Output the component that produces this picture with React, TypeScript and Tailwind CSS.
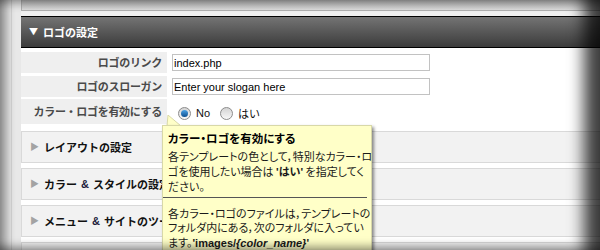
const jp = "font-['Noto_Sans_CJK_JP',sans-serif]";
const latin = "font-['Liberation_Sans','Noto_Sans_CJK_JP',sans-serif]";

function Radio({ checked }: { checked?: boolean }) {
  return (
    <span className="flex h-[13px] w-[13px] items-center justify-center rounded-full border border-[#8c8c8c] bg-gradient-to-b from-[#d4d4d4] to-[#f8f8f8]">
      {checked && (
        <span className="h-[7px] w-[7px] rounded-full bg-gradient-to-b from-[#4aa3e6] to-[#0d4f8f]" />
      )}
    </span>
  );
}

function FormRow({ label, className, children }: { label: string; className: string; children: React.ReactNode }) {
  return (
    <div className={`flex ${className}`}>
      <div className="flex w-[146px] items-center justify-end bg-[#efefef] pr-[5px] text-[11px] font-bold tracking-[-0.3px] text-[#4a4a4a]">
        {label}
      </div>
      <div className="flex flex-1 items-center bg-white pl-[5px]">{children}</div>
    </div>
  );
}

function Section({ children }: { children?: React.ReactNode }) {
  return (
    <div className="flex h-[32px] items-center border border-[#d9d9d9] bg-[#f2f2f2] pl-[8px] text-[11px] font-bold text-[#111]">
      {children && <span className="mr-[5px] text-[9px] text-[#a3a3a3]">▶</span>}
      {children}
    </div>
  );
}

export default function App() {
  return (
    <div className={`relative h-[250px] w-[600px] overflow-hidden bg-[#e8e8e8] ${jp}`}>
      <div className="ml-[11px] h-full border-l border-[#d4d4d4] pl-[9px]">
        <div className="h-full w-[600px] bg-white">
          <div className="h-[11px] border-b border-l border-[#b0b0b0] bg-gradient-to-b from-[#bcbcbc] to-[#dcdcdc]" />
          <div className="h-[5px] bg-[#f0f0f0]" />
          <div className="flex h-[32px] items-center border-y border-black bg-gradient-to-b from-[#747474] to-[#3c3c3c] pl-[8px] text-[11px] font-bold text-white">
            <span className="mr-[5px] text-[9px]">▼</span>ロゴの設定
          </div>

          <FormRow label="ロゴのリンク" className="mt-[4px] h-[21px]">
            <input
              readOnly
              value="index.php"
              className={`h-[17px] w-[258px] border border-[#c2c2c2] bg-white px-[1px] text-[11px] text-black outline-none ${latin}`}
            />
          </FormRow>
          <FormRow label="ロゴのスローガン" className="mt-[3px] h-[21px]">
            <input
              readOnly
              value="Enter your slogan here"
              className={`h-[17px] w-[258px] border border-[#c2c2c2] bg-white px-[1px] text-[11px] text-black outline-none ${latin}`}
            />
          </FormRow>
          <FormRow label="カラー・ロゴを有効にする" className="mt-[2px] h-[25px]">
            <div className="mt-[4px] flex items-center pl-[6px] text-[11px] text-[#111]">
              <Radio checked />
              <span className={`ml-[5px] mr-[10px] ${latin}`}>No</span>
              <Radio />
              <span className="ml-[5px]">はい</span>
            </div>
          </FormRow>

          <div className="mt-[7px] flex flex-col gap-[5px]">
            <Section>レイアウトの設定</Section>
            <Section>
              カラー <span className={`mx-[4px] text-[#1b1b3a] ${latin}`}>&amp;</span> スタイルの設定
            </Section>
            <Section>
              メニュー <span className={`mx-[4px] text-[#1b1b3a] ${latin}`}>&amp;</span> サイトのツール
            </Section>
            <Section />
          </div>
        </div>
      </div>

      {/* tooltip */}
      <svg className="absolute left-[165px] top-[115px]" width="18" height="11" viewBox="0 0 18 11">
        <polygon points="3,0 2,11 16,11" fill="#ffffc8" stroke="#d8d8a8" strokeWidth="1" />
      </svg>
      <div className="absolute left-[162px] top-[125px] h-[140px] w-[210px] border-l border-r border-t border-[#d8d8a8] bg-[#ffffc8] px-[5px] pt-[5px] text-[11px] text-[#1a1a1a] shadow-[2px_2px_3px_rgba(0,0,0,0.45)] [font-feature-settings:'palt']">
        <div className="mb-[3px] whitespace-nowrap text-[11.5px] font-bold leading-[15px] text-black">
          カラー・ロゴを有効にする
        </div>
        <p className="whitespace-nowrap leading-[14.5px]">
          各テンプレートの色として，特別なカラー・ロ
          <br />
          ゴを使用したい場合は <b className={latin}>'</b>
          <b>はい</b>
          <b className={latin}>'</b> を指定してく
          <br />
          ださい。
        </p>
        <div className="-ml-[5px] mt-[3px] h-px w-[204px] bg-[#555]" />
        <p className="mt-[8px] whitespace-nowrap leading-[14.5px]">
          各カラー・ロゴのファイルは，テンプレートの
          <br />
          フォルダ内にある，次のフォルダに入ってい
          <br />
          ます。
          <b className={latin}>
            'images/<i>{"{color_name}"}</i>'
          </b>
        </p>
      </div>

      {/* vignette */}
      <div className="pointer-events-none absolute inset-0 shadow-[inset_14px_0_10px_-8px_rgba(0,0,0,0.4),inset_-26px_0_16px_-10px_rgba(0,0,0,0.75),inset_0_10px_8px_-6px_rgba(0,0,0,0.3),inset_0_-10px_8px_-6px_rgba(0,0,0,0.35)]" />
    </div>
  );
}
